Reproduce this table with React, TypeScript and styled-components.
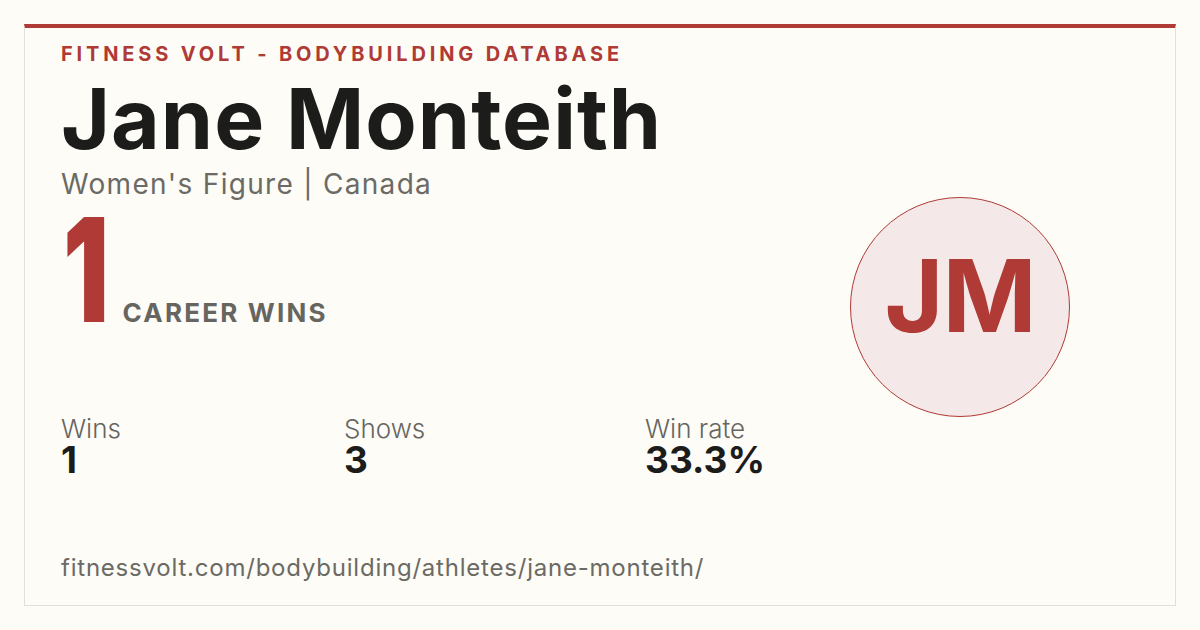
import React from 'react';
import styled, { createGlobalStyle } from 'styled-components';

const GlobalStyle = createGlobalStyle`
	html, body {
		margin: 0;
		padding: 0;
		background: #fdfcf7;
	}
	body {
		font-family: Inter, 'Noto Sans', 'Liberation Sans', sans-serif;
	}
`;

const Page = styled.div`
	box-sizing: border-box;
	height: 630px;
	padding: 24px;
	width: 1200px;
`;

const Card = styled.div`
	border: 1px solid #e3e0d9;
	border-top: 4px solid #b03a35;
	box-sizing: border-box;
	display: flex;
	height: 100%;
	padding: 14px 36px 22px 36px;
`;

const Main = styled.div`
	display: flex;
	flex: 1;
	flex-direction: column;
`;

const Eyebrow = styled.div`
	color: #b03a35;
	font-size: 20px;
	font-weight: 700;
	letter-spacing: 3.85px;
	line-height: 24px;
`;

const Name = styled.h1`
	color: #1c1c1a;
	font-size: 84px;
	font-weight: 700;
	letter-spacing: 1px;
	line-height: 84px;
	margin: 11px 0 0;
`;

const Subtitle = styled.div`
	color: #6b6a64;
	font-size: 28px;
	font-weight: 400;
	letter-spacing: 1.3px;
	line-height: 34px;
	margin-top: 6px;
`;

const Headline = styled.div`
	align-items: baseline;
	display: flex;
	margin-top: 9px;
`;

const BigNumber = styled.span`
	color: #b03a35;
	display: inline-block;
	font-size: 145px;
	font-weight: 900;
	line-height: 120px;
	margin: 0 -6px 0 2px;
	transform: scaleX(0.7);
	transform-origin: left center;
`;

const BigLabel = styled.span`
	color: #66655f;
	font-size: 26px;
	font-weight: 700;
	letter-spacing: 2.2px;
	text-transform: uppercase;
`;

const Stats = styled.div`
	display: grid;
	grid-template-columns: 283px 301px auto;
	margin-top: 84px;
`;

const Stat = styled.div`
	display: flex;
	flex-direction: column;
`;

const StatLabel = styled.span`
	color: #66655f;
	font-size: 26px;
	font-weight: 300;
	line-height: 30px;
`;

const StatValue = styled.span`
	color: #1c1c1a;
	font-size: 37px;
	font-weight: 700;
	line-height: 31px;
`;

const Url = styled.div`
	color: #6b6a64;
	font-size: 24px;
	font-weight: 400;
	letter-spacing: 0.78px;
	line-height: 30px;
	margin-top: auto;
`;

const Aside = styled.div`
	align-items: center;
	display: flex;
	padding: 0 69px 12px 0;
`;

const Avatar = styled.div`
	align-items: center;
	background: #f4e8e8;
	border: 1.5px solid #b03a35;
	border-radius: 50%;
	box-sizing: border-box;
	color: #b03a35;
	display: flex;
	font-size: 101px;
	font-weight: 700;
	height: 220px;
	justify-content: center;
	letter-spacing: -1px;
	padding-bottom: 24px;
	width: 220px;
`;

const stats = [
	{ label: 'Wins', value: '1' },
	{ label: 'Shows', value: '3' },
	{ label: 'Win rate', value: '33.3%' },
];

export default function App() {
	return (
		<>
			<GlobalStyle />
			<Page>
				<Card>
					<Main>
						<Eyebrow>FITNESS VOLT - BODYBUILDING DATABASE</Eyebrow>
						<Name>Jane Monteith</Name>
						<Subtitle>Women's Figure | Canada</Subtitle>
						<Headline>
							<BigNumber>1</BigNumber>
							<BigLabel>Career wins</BigLabel>
						</Headline>
						<Stats>
							{stats.map((s) => (
								<Stat key={s.label}>
									<StatLabel>{s.label}</StatLabel>
									<StatValue>{s.value}</StatValue>
								</Stat>
							))}
						</Stats>
						<Url>fitnessvolt.com/bodybuilding/athletes/jane-monteith/</Url>
					</Main>
					<Aside>
						<Avatar>JM</Avatar>
					</Aside>
				</Card>
			</Page>
		</>
	);
}
